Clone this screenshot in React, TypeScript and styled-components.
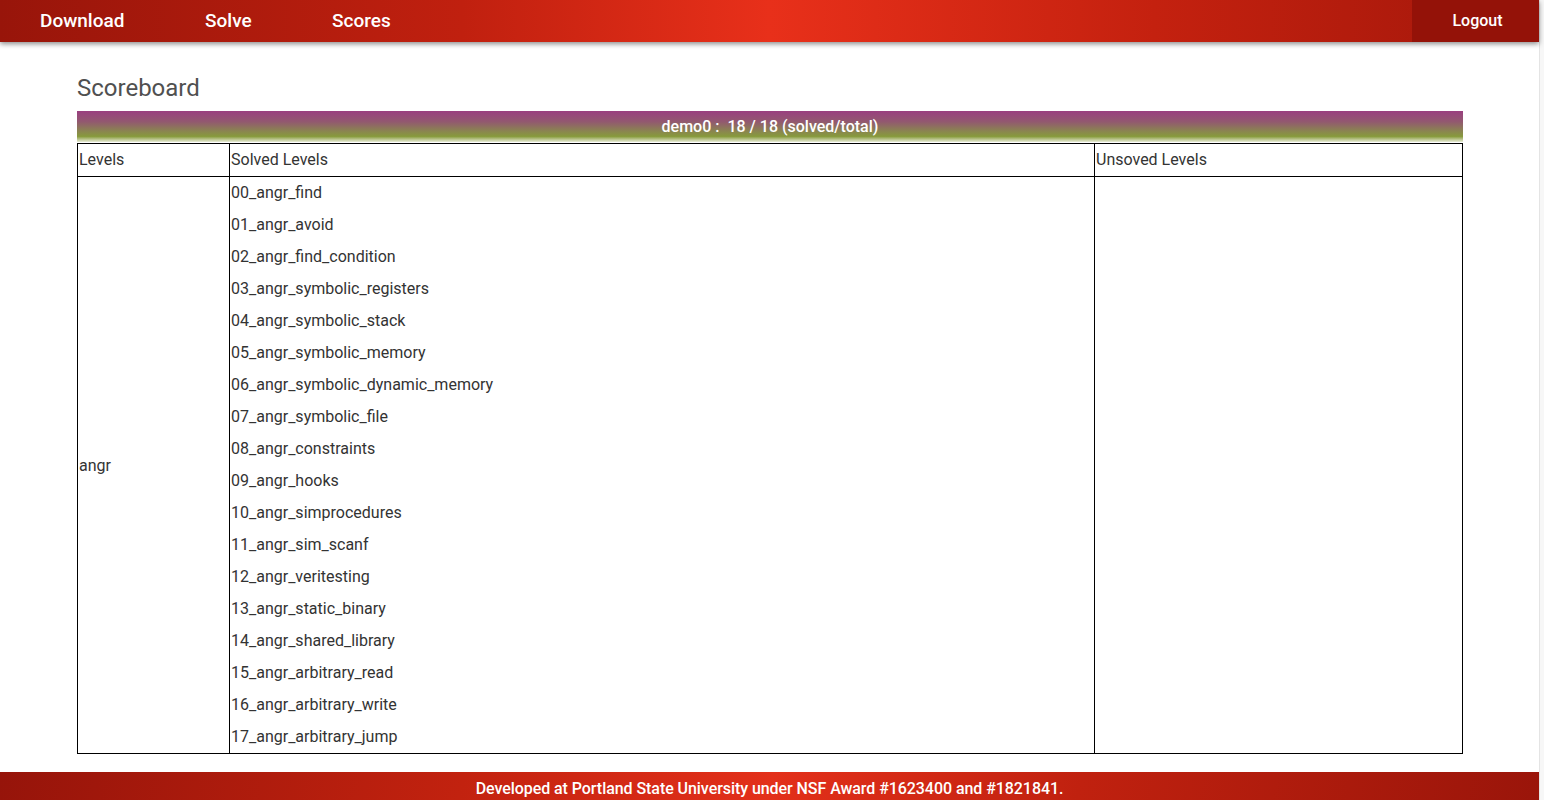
import React from 'react'
import styled, { createGlobalStyle } from 'styled-components'

const GlobalStyle = createGlobalStyle`
html, body {
  margin: 0;
  padding: 0;
  background: #f7f7f7;
  font-family: Roboto, "Liberation Sans", Arial, sans-serif;
  overflow: hidden;
}
`

const Page = styled.div`
width: calc(100% - 4px);
min-height: 100vh;
background: #ffffff;
border-right: 1px solid #e4e4e4;
box-sizing: border-box;
display: flex;
flex-direction: column;
`

const NavBar = styled.nav`
height: 42px;
display: flex;
align-items: stretch;
background: linear-gradient(to right, #98150a 0%, #c0200f 30%, #e8301a 50%, #c4210f 75%, #a3170b 100%);
box-shadow: 0 2px 5px rgba(0, 0, 0, 0.45);
position: relative;
z-index: 1;
`

const NavLinks = styled.div`
flex: 1;
display: flex;
align-items: center;
padding-left: 40px;
`

const NavLink = styled.a<{ $width: number }>`
width: ${p => p.$width}px;
color: #ffffff;
font-size: 19px;
font-weight: 500;
text-decoration: none;
line-height: 42px;
`

const LogoutBox = styled.a`
width: 127px;
background: #941208;
color: #ffffff;
font-size: 16px;
font-weight: 500;
display: flex;
align-items: center;
justify-content: center;
padding: 0 0 2px 4px;
box-sizing: border-box;
text-decoration: none;
`

const Main = styled.main`
padding: 30px 76px 0 77px;
flex: 1;
`

const Title = styled.h1`
margin: 0 0 7px 0;
font-size: 24px;
font-weight: 400;
color: #505050;
line-height: 32px;
`

const Banner = styled.div`
height: 31px;
background: linear-gradient(to bottom, #9a3f80 0%, #92596f 35%, #8a8550 65%, #879a3c 82%, #e9ecd8 100%);
color: #ffffff;
font-size: 16px;
font-weight: 500;
text-align: center;
line-height: 31px;
white-space: pre;
margin-bottom: 1px;
`

const Grid = styled.div`
display: grid;
grid-template-columns: 152px 865px 1fr;
border: 1px solid #000000;
color: #333333;
font-size: 16px;
`

const HeadCell = styled.div<{ $last?: boolean }>`
height: 32px;
line-height: 32px;
padding-left: 1px;
border-bottom: 1px solid #000000;
border-right: ${p => (p.$last ? 'none' : '1px solid #000000')};
`

const GroupCell = styled.div`
display: flex;
align-items: center;
padding-left: 1px;
border-right: 1px solid #000000;
`

const LevelList = styled.div`
display: flex;
flex-direction: column;
border-right: 1px solid #000000;
`

const LevelItem = styled.div`
height: 32px;
line-height: 32px;
padding-left: 1px;
`

const EmptyCell = styled.div``

const Footer = styled.footer`
margin-top: 18px;
height: 40px;
background: linear-gradient(100deg, #96140a 0%, #c2220f 30%, #e3301a 50%, #c0210f 70%, #9a150a 100%);
color: #ffffff;
font-size: 16px;
font-weight: 500;
letter-spacing: -0.06px;
text-align: center;
line-height: 34px;
`

const levels = [
  '00_angr_find',
  '01_angr_avoid',
  '02_angr_find_condition',
  '03_angr_symbolic_registers',
  '04_angr_symbolic_stack',
  '05_angr_symbolic_memory',
  '06_angr_symbolic_dynamic_memory',
  '07_angr_symbolic_file',
  '08_angr_constraints',
  '09_angr_hooks',
  '10_angr_simprocedures',
  '11_angr_sim_scanf',
  '12_angr_veritesting',
  '13_angr_static_binary',
  '14_angr_shared_library',
  '15_angr_arbitrary_read',
  '16_angr_arbitrary_write',
  '17_angr_arbitrary_jump',
]

export default function App(): JSX.Element {
  return (
    <Page>
      <GlobalStyle />
      <NavBar>
        <NavLinks>
          <NavLink href="#" $width={165}>Download</NavLink>
          <NavLink href="#" $width={127}>Solve</NavLink>
          <NavLink href="#" $width={100}>Scores</NavLink>
        </NavLinks>
        <LogoutBox href="#">Logout</LogoutBox>
      </NavBar>
      <Main>
        <Title>Scoreboard</Title>
        <Banner>{'demo0 :  18 / 18 (solved/total)'}</Banner>
        <Grid>
          <HeadCell>Levels</HeadCell>
          <HeadCell>Solved Levels</HeadCell>
          <HeadCell $last>Unsoved Levels</HeadCell>
          <GroupCell>angr</GroupCell>
          <LevelList>
            {levels.map(l => (
              <LevelItem key={l}>{l}</LevelItem>
            ))}
          </LevelList>
          <EmptyCell />
        </Grid>
      </Main>
      <Footer>Developed at Portland State University under NSF Award #1623400 and #1821841.</Footer>
    </Page>
  )
}
